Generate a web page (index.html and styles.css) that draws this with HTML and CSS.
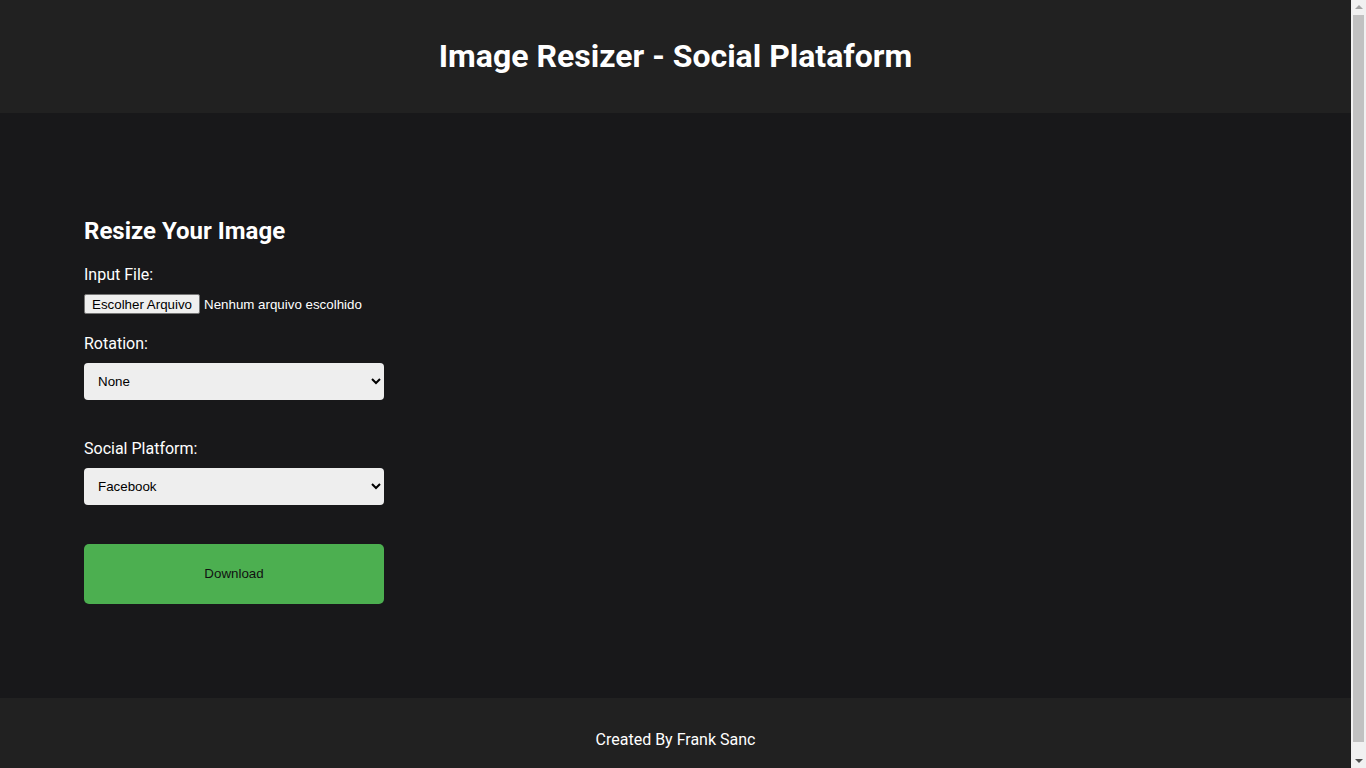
FILE: index.html
```html
<!DOCTYPE html>
<html lang="pt">
<head>
<meta charset="utf-8">
<title>Image Resizer - Social Plataform</title>
<link rel="stylesheet" href="styles.css">
</head>
<body>
<div class="page">
  <header class="site-header">
    <h1 class="site-title">Image Resizer - Social Plataform</h1>
  </header>
  <main class="site-main">
    <section class="resize-card">
      <h2 class="card-title">Resize Your Image</h2>
      <label class="field-label">Input File:</label>
      <div class="file-row">
        <span class="file-button">Escolher Arquivo</span>
        <span class="file-name">Nenhum arquivo escolhido</span>
      </div>
      <label class="field-label">Rotation:</label>
      <select class="field-select">
        <option>None</option>
        <option>90°</option>
        <option>180°</option>
        <option>270°</option>
      </select>
      <label class="field-label">Social Platform:</label>
      <select class="field-select">
        <option>Facebook</option>
        <option>Instagram</option>
        <option>Twitter</option>
      </select>
      <button class="download-button" type="button">Download</button>
    </section>
  </main>
  <footer class="site-footer">
    <p class="footer-text">Created By Frank Sanc</p>
  </footer>
</div>
<div class="fake-scrollbar" aria-hidden="true">
  <span class="sb-arrow sb-up"></span>
  <span class="sb-thumb"></span>
  <span class="sb-arrow sb-down"></span>
</div>
</body>
</html>
```
FILE: styles.css
```css
html, body {
  margin: 0;
  padding: 0;
}
body {
  font-family: Roboto, "Liberation Sans", sans-serif;
  background: #18181a;
  color: #ffffff;
}
.page {
  margin-right: 15px;
}
.site-header {
  box-sizing: border-box;
  background: #212121;
  height: 113px;
  padding-bottom: 2px;
  display: flex;
  align-items: center;
  justify-content: center;
}
.site-title {
  margin: 0;
  font-size: 32px;
  font-weight: 700;
  line-height: 38px;
}
.site-main {
  background: #18181a;
  padding: 104px 84px 94px;
}
.resize-card {
  display: flex;
  flex-direction: column;
  align-items: flex-start;
  width: 300px;
}
.card-title {
  margin: 0 0 20px;
  font-size: 24px;
  font-weight: 700;
}
.field-label {
  display: block;
  font-size: 16px;
  margin-bottom: 10px;
}
.file-row {
  display: flex;
  align-items: center;
  gap: 4px;
  height: 20px;
  margin-bottom: 20px;
  font-family: "Liberation Sans", Arial, sans-serif;
  font-size: 13.33px;
  white-space: nowrap;
}
.file-button {
  box-sizing: border-box;
  height: 20px;
  line-height: 18px;
  padding: 1px 7px 0;
  background: #efefef;
  color: #000000;
  border: 1px solid #767676;
  border-radius: 2px;
}
.file-name {
  color: #ffffff;
}
.field-select {
  width: 300px;
  height: 37px;
  padding: 0 8px 0 10px;
  margin: 0 0 38px;
  border: none;
  border-radius: 4px;
  background: #eeeeee;
  color: #000000;
  font-family: "Liberation Sans", Arial, sans-serif;
  font-size: 13.33px;
}
.field-select + .field-label {
  margin-top: 0.5px;
}
.download-button {
  width: 300px;
  height: 60px;
  margin-top: 1px;
  border: none;
  border-radius: 5px;
  background: #4caf50;
  color: #111111;
  font-family: "Liberation Sans", Arial, sans-serif;
  font-size: 13.33px;
  cursor: pointer;
}
.site-footer {
  background: #212121;
  padding: 32px 0 33px;
  text-align: center;
}
.footer-text {
  margin: 0;
  font-size: 16px;
  color: #ffffff;
}
.fake-scrollbar {
  position: fixed;
  top: 0;
  right: 0;
  bottom: 0;
  width: 15px;
  background: #f1f1f1;
  display: flex;
  flex-direction: column;
  align-items: center;
}
.sb-arrow {
  display: block;
  width: 0;
  height: 0;
  border-left: 4px solid transparent;
  border-right: 4px solid transparent;
}
.sb-up {
  margin-top: 5px;
  border-bottom: 4px solid #a3a3a3;
}
.sb-down {
  margin-bottom: 5px;
  border-top: 4px solid #505050;
}
.sb-thumb {
  display: block;
  width: 11px;
  flex: 1;
  margin: 6px 0 17px;
  background: #c1c1c1;
}
```
